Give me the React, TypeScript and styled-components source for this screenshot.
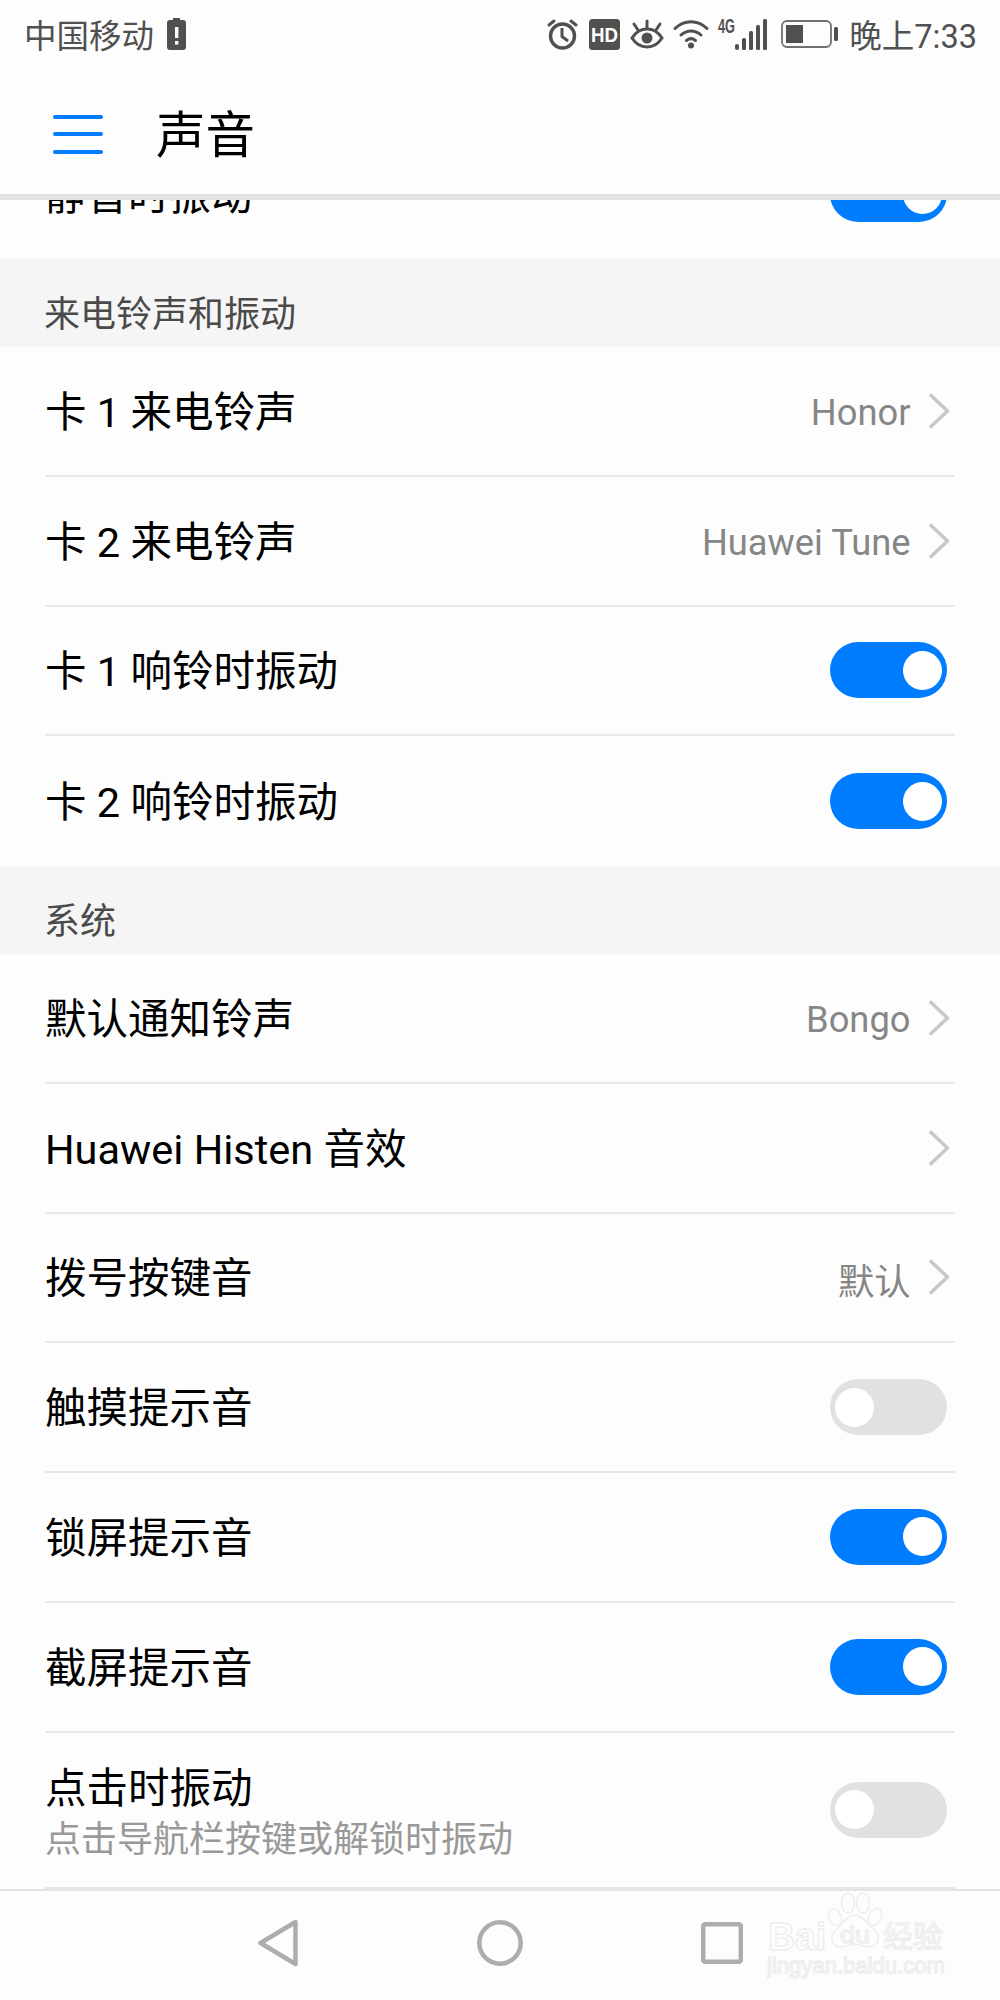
import React from 'react';
import styled, { createGlobalStyle } from 'styled-components';

const FONT = `Roboto, "Noto Sans CJK SC", sans-serif`;

const GlobalStyle = createGlobalStyle`
  html, body {
    margin: 0;
    padding: 0;
    background: #fdfdfd;
  }
`;

const Page = styled.div`
  position: relative;
  display: flex;
  flex-direction: column;
  width: 1000px;
  height: 2000px;
  overflow: hidden;
  background: #fdfdfd;
  font-family: ${FONT};
`;

const StatusBar = styled.div`
  display: flex;
  align-items: center;
  justify-content: space-between;
  height: 68px;
  padding: 0 23px 0 24px;
  color: #505050;
  font-size: 32.5px;
`;

const StatusLeft = styled.div`
  display: flex;
  align-items: center;
  gap: 13px;
`;

const StatusRight = styled.div`
  display: flex;
  align-items: center;
`;

const StatusIcon = styled.svg<{ $gap?: number }>`
  display: block;
  margin-right: ${p => p.$gap ?? 0}px;
  flex: none;
  overflow: visible;
`;

const StatusText = styled.span`
  margin-bottom: 2px;
`;

const Clock = styled(StatusText)`
  margin-left: 11px;
`;

const Header = styled.header`
  display: flex;
  align-items: center;
  gap: 53px;
  height: 126px;
  padding-left: 53px;
  border-bottom: 6px solid #e2e2e2;
`;

const MenuButton = styled.div`
  display: flex;
  flex-direction: column;
  gap: 13.5px;
  width: 50px;
  margin-top: 6px;
`;

const MenuBar = styled.span`
  height: 4px;
  border-radius: 2px;
  background: #007dff;
`;

const Title = styled.h1`
  margin: 12px 0 0;
  font-size: 49.5px;
  font-weight: 400;
  line-height: 1;
  color: #000;
`;

const Scroller = styled.main`
  flex: 1;
  min-height: 0;
  overflow: hidden;
`;

const ScrollContent = styled.div`
  margin-top: -70.75px;
`;

const SectionLabel = styled.div`
  display: flex;
  align-items: flex-end;
  box-sizing: border-box;
  height: 88px;
  padding: 0 0 8px 44px;
  background: #f5f5f5;
  color: #4a4a4a;
  font-size: 36px;
  line-height: 48px;
`;

const Group = styled.section`
  padding: 0 45px;
`;

const Row = styled.div<{ $tall?: boolean; $last?: boolean }>`
  display: flex;
  align-items: center;
  justify-content: space-between;
  box-sizing: border-box;
  height: ${p => (p.$tall ? 156.5 : 129.75)}px;
  padding-right: 8px;
  border-bottom: ${p => (p.$last ? 'none' : '2px solid #e8e8e8')};
`;

const RowText = styled.div`
  display: flex;
  flex-direction: column;
  padding-top: 2.5px;
`;

const RowTitle = styled.div`
  padding-top: 4px;
  font-size: 41.5px;
  line-height: 52px;
  color: #000;
`;

const RowHint = styled.div`
  margin-top: 2.5px;
  font-size: 36px;
  line-height: 46px;
  color: #999;
`;

const RowAction = styled.div`
  display: flex;
  align-items: center;
  gap: 17px;
  margin-right: -2.5px;
`;

const RowValue = styled.span`
  padding-top: 3px;
  font-size: 36.3px;
  color: #868686;
`;

const Switch = styled.div<{ $on: boolean }>`
  display: flex;
  align-items: center;
  justify-content: ${p => (p.$on ? 'flex-end' : 'flex-start')};
  box-sizing: border-box;
  width: 117px;
  height: 56px;
  padding: 0 5px;
  border-radius: 28px;
  background: ${p => (p.$on ? '#007dff' : '#e1e1e1')};
`;

const SwitchKnob = styled.span`
  width: 39px;
  height: 39px;
  border-radius: 50%;
  background: #fff;
`;

const NavBar = styled.nav`
  display: flex;
  align-items: center;
  justify-content: center;
  gap: 178px;
  box-sizing: border-box;
  height: 111px;
  padding: 0 0 6px 0;
  border-top: 2px solid #e4e4e4;
`;

const Watermark = styled.svg`
  position: absolute;
  right: 53px;
  bottom: 20px;
`;

const Chevron = () => (
  <svg width="22" height="36" viewBox="0 0 22 36" fill="none">
    <path d="M3 2.500 19.500 18 3 33.500" stroke="#c8c8c8" strokeWidth="3.600" strokeLinecap="round" strokeLinejoin="round" />
  </svg>
);

const Toggle = ({ on }: { on: boolean }) => (
  <Switch $on={on}>
    <SwitchKnob />
  </Switch>
);

const Value = ({ children }: { children?: React.ReactNode }) => (
  <RowAction>
    {children && <RowValue>{children}</RowValue>}
    <Chevron />
  </RowAction>
);

export default function App() {
  return (
    <Page>
      <GlobalStyle />
      <StatusBar>
        <StatusLeft>
          <StatusText>中国移动</StatusText>
          <StatusIcon width="19" height="32" viewBox="0 0 19 32">
            <path d="M6 0h7v2h3a3 3 0 0 1 3 3v24a3 3 0 0 1-3 3H3a3 3 0 0 1-3-3V5a3 3 0 0 1 3-3h3z" fill="#505050" />
            <rect x="8" y="9" width="3.400" height="11" fill="#fff" />
            <rect x="8" y="23" width="3.400" height="3.600" fill="#fff" />
          </StatusIcon>
        </StatusLeft>
        <StatusRight>
          <StatusIcon $gap={11} width="31" height="32" viewBox="0 0 31 32" fill="none" stroke="#505050">
            <circle cx="15.500" cy="18" r="12" strokeWidth="3.400" />
            <path d="M15 10v8.500l6 4.500" strokeWidth="3" />
            <path d="M2 7l5-4M29 7l-5-4" strokeWidth="3" strokeLinecap="round" />
          </StatusIcon>
          <StatusIcon $gap={10} width="31" height="31" viewBox="0 0 31 31">
            <rect width="31" height="31" rx="3.500" fill="#505050" />
            <text x="15.500" y="23" textAnchor="middle" fontFamily="'Liberation Sans', sans-serif" fontWeight="700" fontSize="21" textLength="27" lengthAdjust="spacingAndGlyphs" fill="#fff">HD</text>
          </StatusIcon>
          <StatusIcon $gap={9} width="34" height="30" viewBox="0 0 34 30" fill="none" stroke="#505050" strokeLinecap="round">
            <path d="M2 19c3.800-6 8.800-9 15-9s11.200 3 15 9c-3.800 6-8.800 9-15 9s-11.200-3-15-9z" strokeWidth="3" />
            <circle cx="17" cy="19" r="5.500" fill="#505050" stroke="none" />
            <path d="M17 2v6M4 5l4 6M30 5l-4 6" strokeWidth="3" />
          </StatusIcon>
          <StatusIcon $gap={9} width="36" height="30" viewBox="0 0 36 30" fill="none" stroke="#505050" strokeLinecap="round">
            <path d="M2 9.500c9.500-9 22.500-9 32 0" strokeWidth="3" />
            <path d="M8 16c6-5.500 14-5.500 20 0" strokeWidth="3" />
            <path d="M13.500 21.500c2.800-2.300 6.200-2.300 9 0" strokeWidth="3" />
            <circle cx="18" cy="26.500" r="3" fill="#505050" stroke="none" />
          </StatusIcon>
          <StatusIcon $gap={14} width="49" height="32" viewBox="0 0 49 32">
            <text x="0" y="14.500" fontFamily="'Liberation Sans', sans-serif" fontWeight="700" fontSize="19.500" textLength="17" lengthAdjust="spacingAndGlyphs" fill="#505050">4G</text>
            <rect x="17" y="26" width="4" height="6" rx="2" fill="#505050" />
            <rect x="24" y="20" width="4" height="12" rx="1.500" fill="#505050" />
            <rect x="31" y="13" width="4" height="19" rx="1.500" fill="#505050" />
            <rect x="38" y="7" width="4" height="25" rx="1.500" fill="#505050" />
            <rect x="45" y="1" width="4" height="31" rx="1.500" fill="#505050" />
          </StatusIcon>
          <StatusIcon width="57" height="28" viewBox="0 0 57 28" fill="none">
            <rect x="1" y="1" width="49" height="26" rx="5" stroke="#707070" strokeWidth="1.800" />
            <rect x="5" y="5" width="17" height="18" fill="#505050" />
            <rect x="53" y="7" width="4" height="14" rx="1.500" fill="#505050" />
          </StatusIcon>
          <Clock>晚上7:33</Clock>
        </StatusRight>
      </StatusBar>

      <Header>
        <MenuButton>
          <MenuBar />
          <MenuBar />
          <MenuBar />
        </MenuButton>
        <Title>声音</Title>
      </Header>

      <Scroller>
        <ScrollContent>
          <Group>
            <Row $last>
              <RowTitle>静音时振动</RowTitle>
              <Toggle on />
            </Row>
          </Group>

          <SectionLabel>来电铃声和振动</SectionLabel>
          <Group>
            <Row>
              <RowTitle>卡 1 来电铃声</RowTitle>
              <Value>Honor</Value>
            </Row>
            <Row>
              <RowTitle>卡 2 来电铃声</RowTitle>
              <Value>Huawei Tune</Value>
            </Row>
            <Row>
              <RowTitle>卡 1 响铃时振动</RowTitle>
              <Toggle on />
            </Row>
            <Row $last>
              <RowTitle>卡 2 响铃时振动</RowTitle>
              <Toggle on />
            </Row>
          </Group>

          <SectionLabel>系统</SectionLabel>
          <Group>
            <Row>
              <RowTitle>默认通知铃声</RowTitle>
              <Value>Bongo</Value>
            </Row>
            <Row>
              <RowTitle>Huawei Histen 音效</RowTitle>
              <Value />
            </Row>
            <Row>
              <RowTitle>拨号按键音</RowTitle>
              <Value>默认</Value>
            </Row>
            <Row>
              <RowTitle>触摸提示音</RowTitle>
              <Toggle on={false} />
            </Row>
            <Row>
              <RowTitle>锁屏提示音</RowTitle>
              <Toggle on />
            </Row>
            <Row>
              <RowTitle>截屏提示音</RowTitle>
              <Toggle on />
            </Row>
            <Row $tall>
              <RowText>
                <RowTitle>点击时振动</RowTitle>
                <RowHint>点击导航栏按键或解锁时振动</RowHint>
              </RowText>
              <Toggle on={false} />
            </Row>
          </Group>
        </ScrollContent>
      </Scroller>

      <NavBar>
        <svg width="42" height="48" viewBox="0 0 42 48" fill="none">
          <path d="M38.500 3 3.500 24l35 21z" stroke="#adadad" strokeWidth="4.500" strokeLinejoin="round" />
        </svg>
        <svg width="46" height="46" viewBox="0 0 46 46" fill="none">
          <circle cx="23" cy="23" r="20.700" stroke="#adadad" strokeWidth="4.500" />
        </svg>
        <svg width="42" height="42" viewBox="0 0 42 42" fill="none">
          <rect x="2.200" y="2.200" width="37.600" height="37.600" rx="2" stroke="#adadad" strokeWidth="4.500" />
        </svg>
      </NavBar>

      <Watermark width="180" height="90" viewBox="0 0 180 90" fill="#fdfdfd" stroke="#ededed" strokeWidth="1.400">
        <text x="1" y="60" fontFamily="'Liberation Sans', sans-serif" fontWeight="700" fontSize="38" textLength="58" lengthAdjust="spacingAndGlyphs">Bai</text>
        <ellipse cx="68" cy="27" rx="6" ry="9" transform="rotate(-25 68 27)" />
        <ellipse cx="81" cy="13" rx="6.500" ry="10" />
        <ellipse cx="96" cy="13" rx="6.500" ry="10" />
        <ellipse cx="108" cy="27" rx="6" ry="9" transform="rotate(25 108 27)" />
        <path d="M88 25c-8 0-11 8-17 13-6 4-7 9-6 13 2 6 9 7 14 5 6-2 12-2 18 0 5 2 12 1 14-5 1-4 0-9-6-13-6-5-9-13-17-13z" />
        <text x="88" y="53" textAnchor="middle" fontFamily="'Liberation Sans', sans-serif" fontSize="24" textLength="30" lengthAdjust="spacingAndGlyphs">du</text>
        <text x="116" y="57" fontFamily={FONT} fontSize="30">经验</text>
        <text x="0" y="83" fontFamily="'Liberation Sans', sans-serif" fontSize="22.500" textLength="178" lengthAdjust="spacingAndGlyphs">jingyan.baidu.com</text>
      </Watermark>
    </Page>
  );
}
